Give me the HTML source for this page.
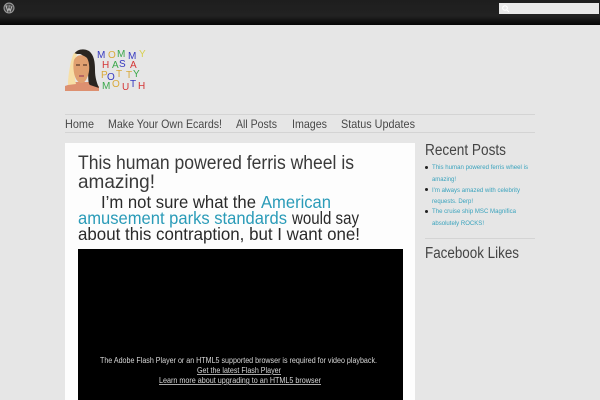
<!DOCTYPE html>
<html>
<head>
<meta charset="utf-8">
<style>
html,body{margin:0;padding:0}
body{width:600px;height:400px;overflow:hidden;background:#e6e6e6;position:relative}
#bar{position:absolute;left:0;top:0;width:600px;height:25px;background:linear-gradient(#1e1e1e 0,#222 16px,#111 21px,#060606 25px)}
#search{position:absolute;left:499px;top:3px;width:100px;height:11px;background:#e8e8e8}
.line{position:absolute;height:1px;background:#d4d4d4}
#main{position:absolute;left:65px;top:143px;width:350px;height:257px;background:#fdfdfd}
#video{position:absolute;left:78px;top:249px;width:325px;height:151px;background:#000}
#txt{position:absolute;left:0;top:0}
text{font-family:"Liberation Sans",sans-serif;white-space:pre}
.nav{font-size:12px;fill:#484848}
.t{font-size:19.5px;fill:#3a3a3a}
.p{font-size:17.5px;fill:#2a2a2a}
.a{fill:#2a9bb8}
.s{font-size:15.5px;fill:#444}
.li{font-size:6.6px;fill:#3aa3bd}
.f{font-size:7.8px;fill:#d8d8d8}
.u{text-decoration:underline}
.m{font-size:10px}
</style>
</head>
<body>
<div id="bar">
<svg style="position:absolute;left:3px;top:2px" width="12" height="12" viewBox="0 0 12 12"><circle cx="6" cy="6" r="5.500" fill="#999"/><circle cx="6" cy="6" r="4.400" fill="#444"/><path d="M3 4L4.800 9.200L6 6L7.200 9.200L9 4M2.500 4H4.500M5.500 4H7.500" stroke="#bbb" stroke-width="1" fill="none"/></svg>
<div id="search"><svg style="position:absolute;left:2px;top:1px" width="9" height="9" viewBox="0 0 9 9"><circle cx="4" cy="4" r="2.300" stroke="#fff" fill="none"/><path d="M6 6L8 8" stroke="#fff"/></svg></div>
</div>

<svg style="position:absolute;left:65px;top:48px" width="36" height="44" viewBox="0 0 36 44">
<path d="M0 43V38C3 37 6 36 8 34H26C28 36 31 37 34 38V43Z" fill="#dd9070"/>
<path d="M9 6C12 1 19 0 24 3C29 7 30 14 30 22C30 30 32 35 34 40L25 37C21 34 27 10 15 6Z" fill="#2a2520"/>
<path d="M3 37C3 27 6 10 9 5L12 6C9 14 9 28 11 36Z" fill="#f7dfa6"/>
<path d="M9 12C12 6 18 6 22 10C25 15 25 24 22 30C19 37 14 36 11 31C8 25 8 16 9 12Z" fill="#e0a070"/>
<path d="M11 17H15M18 17H22" stroke="#5a3a2a" stroke-width="1.300"/>
<path d="M14 28H19" stroke="#b35f62" stroke-width="1.800"/>
</svg>

<div class="line" style="left:65px;top:114px;width:470px"></div>
<div class="line" style="left:65px;top:132px;width:470px"></div>
<div id="main"></div>
<div id="video"></div>
<div class="line" style="left:425px;top:238px;width:110px"></div>
<div style="position:absolute;left:425px;top:166px;width:3px;height:3px;background:#222;border-radius:50%"></div>
<div style="position:absolute;left:425px;top:188px;width:3px;height:3px;background:#222;border-radius:50%"></div>
<div style="position:absolute;left:425px;top:210px;width:3px;height:3px;background:#222;border-radius:50%"></div>

<svg id="txt" width="600" height="400" viewBox="0 0 600 400">
<g>
<text class="m" x="97" y="58" fill="#3538c0">M</text>
<text class="m" x="108" y="58" fill="#d9a93a">O</text>
<text class="m" x="117" y="57" fill="#3aa84a">M</text>
<text class="m" x="128" y="59" fill="#3538c0">M</text>
<text class="m" x="139" y="57" fill="#d8d050">Y</text>
<text class="m" x="102" y="68" fill="#d43535">H</text>
<text class="m" x="112" y="68" fill="#3aa84a">A</text>
<text class="m" x="119" y="67" fill="#3538c0">S</text>
<text class="m" x="130" y="68" fill="#d43535">A</text>
<text class="m" x="101" y="78" fill="#d9a93a">P</text>
<text class="m" x="107" y="80" fill="#3538c0">O</text>
<text class="m" x="116" y="77" fill="#d9a93a">T</text>
<text class="m" x="126" y="78" fill="#d9a93a">T</text>
<text class="m" x="133" y="77" fill="#3aa84a">Y</text>
<text class="m" x="102" y="89" fill="#3aa84a">M</text>
<text class="m" x="112" y="87" fill="#d9a93a">O</text>
<text class="m" x="122" y="90" fill="#d43535">U</text>
<text class="m" x="130" y="87" fill="#3538c0">T</text>
<text class="m" x="138" y="89" fill="#d43535">H</text>
</g>
<text class="nav" x="65" y="128" textLength="29" lengthAdjust="spacingAndGlyphs">Home</text>
<text class="nav" x="108" y="128" textLength="114" lengthAdjust="spacingAndGlyphs">Make Your Own Ecards!</text>
<text class="nav" x="236" y="128" textLength="41" lengthAdjust="spacingAndGlyphs">All Posts</text>
<text class="nav" x="292" y="128" textLength="35" lengthAdjust="spacingAndGlyphs">Images</text>
<text class="nav" x="341" y="128" textLength="74" lengthAdjust="spacingAndGlyphs">Status Updates</text>

<text class="t" x="78" y="169" textLength="276" lengthAdjust="spacingAndGlyphs">This human powered ferris wheel is</text>
<text class="t" x="78" y="188" textLength="77" lengthAdjust="spacingAndGlyphs">amazing!</text>
<text class="p" x="101" y="208" textLength="155" lengthAdjust="spacingAndGlyphs">I’m not sure what the</text>
<text class="p a" x="261" y="208" textLength="70" lengthAdjust="spacingAndGlyphs">American</text>
<text class="p a" x="78" y="224" textLength="209" lengthAdjust="spacingAndGlyphs">amusement parks standards</text>
<text class="p" x="292" y="224" textLength="67" lengthAdjust="spacingAndGlyphs">would say</text>
<text class="p" x="78" y="240" textLength="282" lengthAdjust="spacingAndGlyphs">about this contraption, but I want one!</text>

<text class="f" x="100" y="363" textLength="277" lengthAdjust="spacingAndGlyphs">The Adobe Flash Player or an HTML5 supported browser is required for video playback.</text>
<text class="f u" x="197" y="373" textLength="84" lengthAdjust="spacingAndGlyphs">Get the latest Flash Player</text>
<text class="f u" x="159" y="383" textLength="162" lengthAdjust="spacingAndGlyphs">Learn more about upgrading to an HTML5 browser</text>

<text class="s" x="425" y="155" textLength="81" lengthAdjust="spacingAndGlyphs">Recent Posts</text>
<text class="li" x="432" y="169" textLength="96" lengthAdjust="spacingAndGlyphs">This human powered ferris wheel is</text>
<text class="li" x="432" y="181" textLength="24" lengthAdjust="spacingAndGlyphs">amazing!</text>
<text class="li" x="432" y="192" textLength="88" lengthAdjust="spacingAndGlyphs">I'm always amazed with celebrity</text>
<text class="li" x="432" y="203" textLength="41" lengthAdjust="spacingAndGlyphs">requests. Derp!</text>
<text class="li" x="432" y="213" textLength="84" lengthAdjust="spacingAndGlyphs">The cruise ship MSC Magnifica</text>
<text class="li" x="432" y="225" textLength="52" lengthAdjust="spacingAndGlyphs">absolutely ROCKS!</text>
<text class="s" x="425" y="258" textLength="94" lengthAdjust="spacingAndGlyphs">Facebook Likes</text>
</svg>
</body>
</html>
